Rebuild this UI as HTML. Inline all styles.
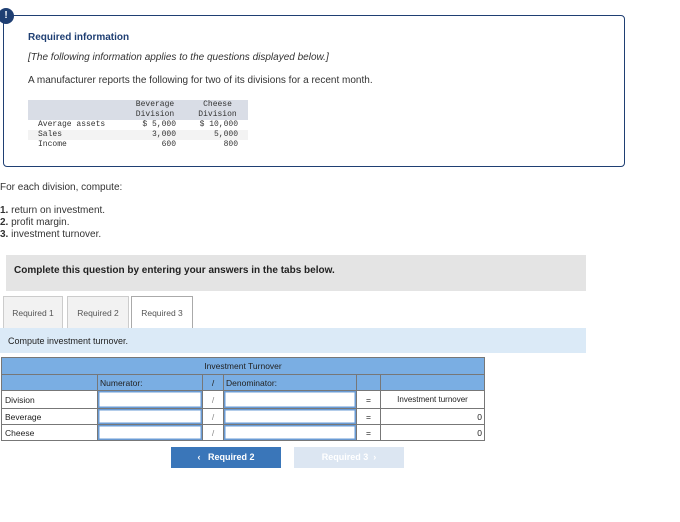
<!DOCTYPE html>
<html><head><style>
body{margin:0;width:680px;height:522px;background:#fff;font-family:"Liberation Sans",sans-serif;color:#222;position:relative;overflow:hidden}
.a{position:absolute}
.mono{font-family:"Liberation Mono",monospace;font-size:8px;color:#333;line-height:10px}
td{padding:0}
</style></head><body>
<div class="a" style="left:3px;top:15px;width:620px;height:150px;border:1.5px solid #1f3f73;border-radius:4px"></div>
<div class="a" style="left:-2px;top:8px;width:16px;height:16px;border-radius:50%;background:#1f3f73;color:#fff;font-weight:bold;font-size:10px;text-align:center;line-height:16px">!</div>
<div class="a" style="left:28px;top:32px;font-size:10px;font-weight:bold;color:#1f3f73">Required information</div>
<div class="a" style="left:28px;top:52px;font-size:10px;font-style:italic;color:#333">[The following information applies to the questions displayed below.]</div>
<div class="a" style="left:28px;top:75px;font-size:10px;color:#333">A manufacturer reports the following for two of its divisions for a recent month.</div>
<div class="a" style="left:28px;top:100px;width:220px;height:20px;background:#d9dde6"></div>
<div class="a" style="left:28px;top:130px;width:220px;height:10px;background:#f3f3f3"></div>
<div class="a mono" style="left:135px;top:100px;width:40px;text-align:center">Beverage<br>Division</div>
<div class="a mono" style="left:195px;top:100px;width:45px;text-align:center">Cheese<br>Division</div>
<div class="a mono" style="left:38px;top:120px">Average assets<br>Sales<br>Income</div>
<div class="a mono" style="left:120px;top:120px;width:56px;text-align:right">$ 5,000<br>3,000<br>600</div>
<div class="a mono" style="left:180px;top:120px;width:58px;text-align:right">$ 10,000<br>5,000<br>800</div>
<div class="a" style="left:0;top:182px;font-size:10px;color:#333;line-height:12px">For each division, compute:</div>
<div class="a" style="left:0;top:205px;font-size:10px;color:#333;line-height:12px"><b>1.</b> return on investment.<br><b>2.</b> profit margin.<br><b>3.</b> investment turnover.</div>
<div class="a" style="left:6px;top:255px;width:580px;height:36px;background:#e4e4e4"></div>
<div class="a" style="left:14px;top:265px;font-size:10px;font-weight:bold;color:#222">Complete this question by entering your answers in the tabs below.</div>
<div class="a" style="left:3px;top:296px;width:60px;height:32px;background:#f2f2f2;border:1px solid #ccc;border-bottom:none;box-sizing:border-box;font-size:8.5px;color:#555;text-align:center;line-height:32px">Required 1</div>
<div class="a" style="left:67px;top:296px;width:62px;height:32px;background:#f2f2f2;border:1px solid #ccc;border-bottom:none;box-sizing:border-box;font-size:8.5px;color:#555;text-align:center;line-height:32px">Required 2</div>
<div class="a" style="left:131px;top:296px;width:62px;height:33px;background:#fff;border:1px solid #aaa;border-bottom:none;box-sizing:border-box;font-size:8.5px;color:#555;text-align:center;line-height:32px">Required 3</div>
<div class="a" style="left:0;top:328px;width:586px;height:25px;background:#dbeaf7"></div>
<div class="a" style="left:8px;top:336px;font-size:9px;color:#222">Compute investment turnover.</div>
<table class="a" style="left:1px;top:357px;border-collapse:collapse;font-size:8.5px;color:#222" >
<tr style="height:17px;background:#7aaee3"><td colspan="6" style="border:1px solid #777;text-align:center">Investment Turnover</td></tr>
<tr style="height:16px;background:#7aaee3"><td style="width:95px;border:1px solid #777"></td><td style="width:102px;border:1px solid #777;padding-left:2px">Numerator:</td><td style="width:20px;border:1px solid #777;text-align:center">/</td><td style="width:130px;border:1px solid #777;padding-left:2px">Denominator:</td><td style="width:23px;border:1px solid #777"></td><td style="width:103px;border:1px solid #777"></td></tr>
<tr style="height:18px"><td style="border:1px solid #777;padding-left:3px">Division</td><td style="border:1px solid #777;box-shadow:inset 0 0 0 1.5px #6a9bd4"></td><td style="border:1px solid #777;text-align:center;color:#888">/</td><td style="border:1px solid #777;box-shadow:inset 0 0 0 1.5px #6a9bd4"></td><td style="border:1px solid #777;text-align:center">=</td><td style="border:1px solid #777;text-align:center;font-size:8px">Investment turnover</td></tr>
<tr style="height:16px"><td style="border:1px solid #777;padding-left:3px">Beverage</td><td style="border:1px solid #777;box-shadow:inset 0 0 0 1.5px #6a9bd4"></td><td style="border:1px solid #777;text-align:center;color:#888">/</td><td style="border:1px solid #777;box-shadow:inset 0 0 0 1.5px #6a9bd4"></td><td style="border:1px solid #777;text-align:center">=</td><td style="border:1px solid #777;text-align:right;padding-right:2px">0</td></tr>
<tr style="height:16px"><td style="border:1px solid #777;padding-left:3px">Cheese</td><td style="border:1px solid #777;box-shadow:inset 0 0 0 1.5px #6a9bd4"></td><td style="border:1px solid #777;text-align:center;color:#888">/</td><td style="border:1px solid #777;box-shadow:inset 0 0 0 1.5px #6a9bd4"></td><td style="border:1px solid #777;text-align:center">=</td><td style="border:1px solid #777;text-align:right;padding-right:2px">0</td></tr>
</table>
<div class="a" style="left:171px;top:447px;width:110px;height:21px;background:#3a76b9;color:#fff;font-size:9px;font-weight:bold;text-align:center;line-height:21px">&lsaquo;&nbsp;&nbsp; Required 2</div>
<div class="a" style="left:294px;top:447px;width:110px;height:21px;background:#dce6f2;color:#fff;font-size:9px;font-weight:bold;text-align:center;line-height:21px">Required 3 &nbsp;&rsaquo;</div>
</body></html>
